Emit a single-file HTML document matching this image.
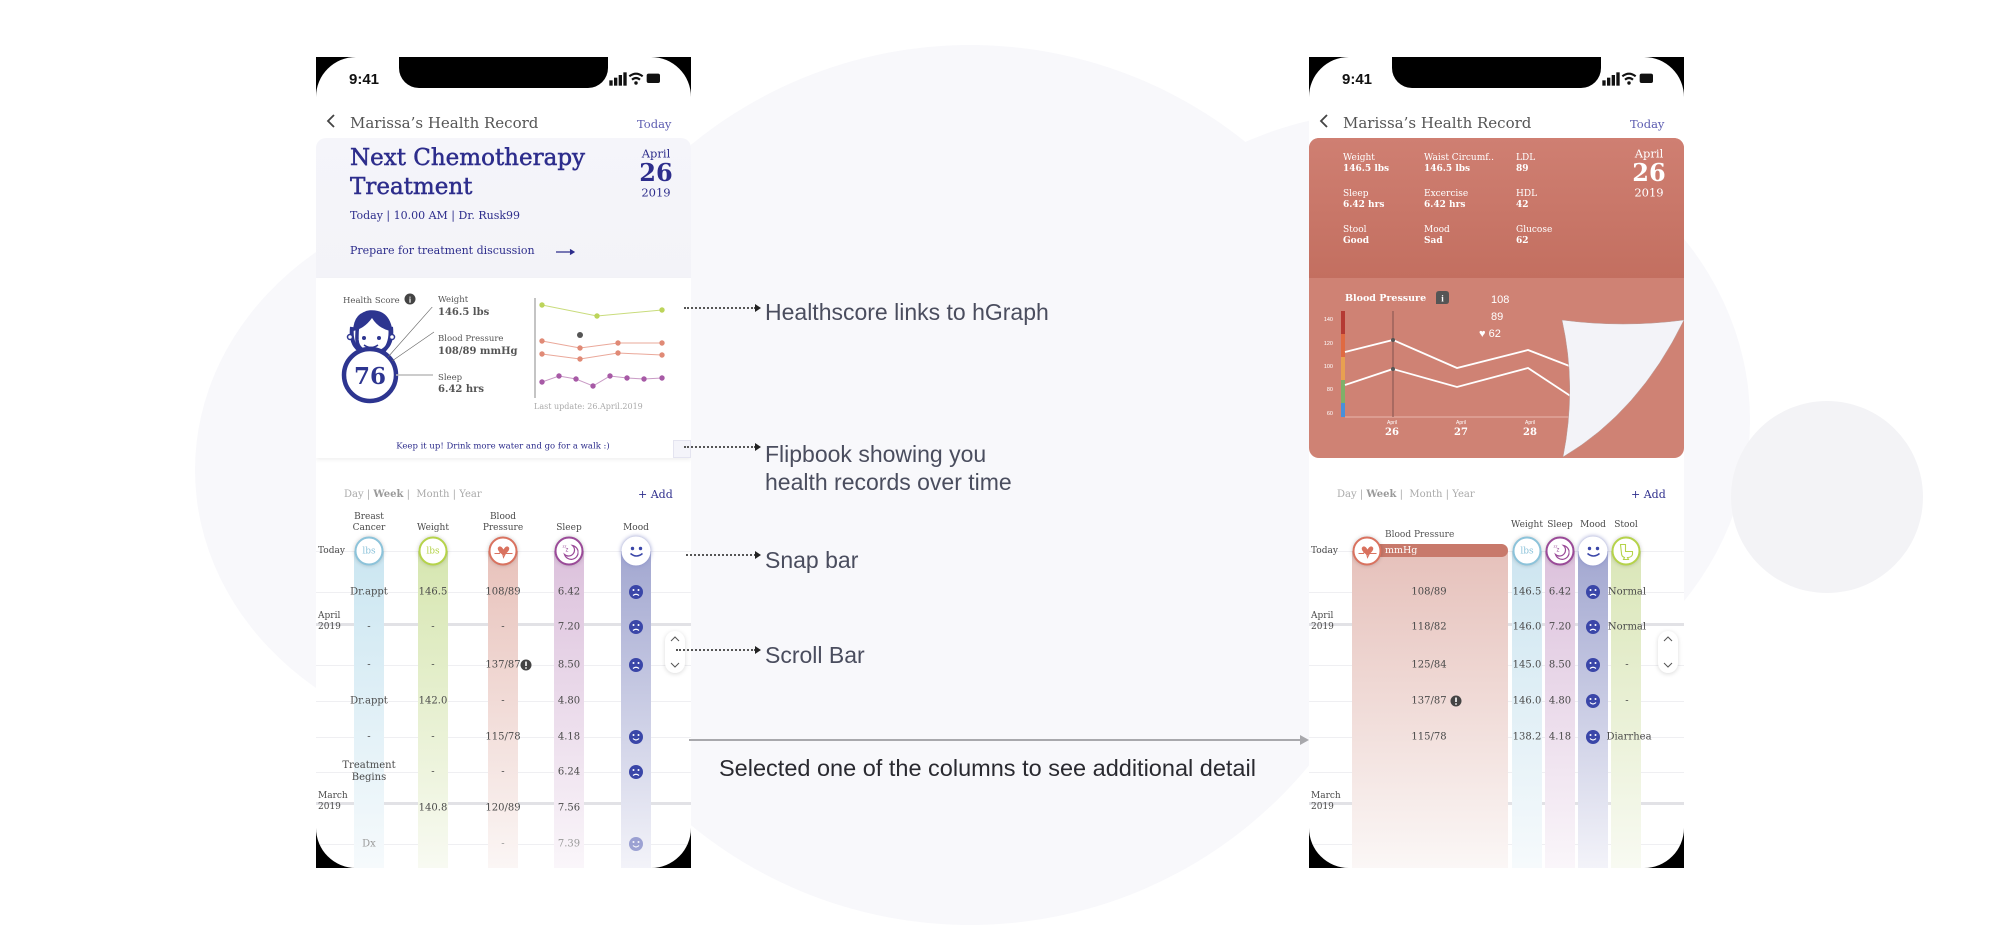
<!DOCTYPE html>
<html><head><meta charset="utf-8"><style>
*{margin:0;padding:0;box-sizing:border-box}
body{width:2000px;height:934px;background:#fff;position:relative;overflow:hidden;font-family:"DejaVu Serif","Liberation Serif",serif}
.blob{position:absolute;background:#f8f8fb;border-radius:50%}
.ph{position:absolute;top:57px;width:375px;height:811px;background:#000;overflow:hidden}
.scr{position:absolute;inset:0;background:#fff;border-radius:40px;overflow:hidden}
.a{position:absolute;white-space:nowrap;line-height:1}
.c{position:absolute;white-space:nowrap;line-height:1.1;transform:translate(-50%,-50%);text-align:center}
.ann{position:absolute;font-family:"Liberation Sans",sans-serif;color:#4a4d5e;font-size:23px;white-space:nowrap;line-height:1}
.dot{position:absolute;border-top:2px dotted #555;height:0}
.dot:after{content:"";position:absolute;right:-5px;top:-5px;border-left:6px solid #222;border-top:4px solid transparent;border-bottom:4px solid transparent}
.strip{position:absolute;width:30px;bottom:0}
.grid{position:absolute;left:0;right:0;height:1px;background:#efeff2}
.gridb{position:absolute;left:0;right:0;height:3px;background:#e2e2e6}
.ic{position:absolute;width:29px;height:29px;border-radius:50%;background:#fff;transform:translate(-50%,-50%);box-shadow:0 0 4px rgba(0,0,0,.2);font-size:9px;display:flex;align-items:center;justify-content:center}
.t{font-size:10px;color:#4a4a4a}
</style></head><body>
<div class="blob" style="left:530px;top:45px;width:880px;height:880px"></div>
<div class="blob" style="left:195px;top:190px;width:650px;height:560px"></div>
<div class="blob" style="left:1050px;top:110px;width:700px;height:620px"></div>
<div class="blob" style="left:1731px;top:401px;width:192px;height:192px;background:#f3f3f6"></div>

<!-- LEFT PHONE -->
<div class="ph" style="left:316px"><div class="scr">
 <div style="position:absolute;left:83px;top:0;width:209px;height:31px;background:#000;border-radius:0 0 20px 20px"></div>
 <div class="a" style="left:33px;top:14px;font:600 15px 'Liberation Sans',sans-serif;color:#111">9:41</div>
 <svg style="position:absolute;left:292px;top:14px" width="56" height="16" viewBox="0 0 40 12"><rect x="0" y="7" width="2.5" height="4" fill="#111"/><rect x="3.5" y="5" width="2.5" height="6" fill="#111"/><rect x="7" y="3" width="2.5" height="8" fill="#111"/><rect x="10.5" y="1" width="2.5" height="10" fill="#111"/><path d="M15 4 Q20 0 25 4 M17 6.5 Q20 4 23 6.5" stroke="#111" stroke-width="1.6" fill="none"/><circle cx="20" cy="9" r="1.3" fill="#111"/><rect x="28" y="2" width="10" height="7" rx="1.5" fill="#111"/></svg>
 <svg style="position:absolute;left:9px;top:56px" width="12" height="16"><path d="M9 2 L3 8 L9 14" stroke="#444" stroke-width="1.8" fill="none"/></svg>
 <div class="a" style="left:34px;top:59px;font-size:15px;color:#555">Marissa’s Health Record</div>
 <div class="a" style="left:321px;top:62px;font-size:11.5px;color:#5b5bb0">Today</div>
 <div style="position:absolute;left:0;top:81px;width:375px;height:140px;background:linear-gradient(#f5f5fa,#f3f3f8);border-radius:10px 10px 0 0"></div>
 <div class="a" style="left:34px;top:90px;font-size:23px;color:#2d2d8c;-webkit-text-stroke:.5px #2d2d8c">Next Chemotherapy</div>
 <div class="a" style="left:34px;top:119px;font-size:23px;color:#2d2d8c;-webkit-text-stroke:.5px #2d2d8c">Treatment</div>
 <div class="a" style="left:34px;top:153px;font-size:11px;color:#2d2d8c">Today | 10.00 AM | Dr. Rusk99</div>
 <div class="a" style="left:34px;top:188px;font-size:11px;color:#2d2d8c">Prepare for treatment discussion</div>
 <svg style="position:absolute;left:240px;top:191px" width="20" height="8"><path d="M0 4 H17 M14 1.5 L18 4 L14 6.5" stroke="#2d2d8c" stroke-width="1.2" fill="#2d2d8c"/></svg>
 <div class="c" style="left:340px;top:97px;font-size:11.5px;color:#2d2d8c">April</div>
 <div class="c" style="left:340px;top:116px;font-size:24px;font-weight:bold;color:#2d2d8c">26</div>
 <div class="c" style="left:340px;top:136px;font-size:11.5px;color:#2d2d8c">2019</div>
 <div style="position:absolute;left:0;top:221px;width:375px;height:180px;background:#fff;box-shadow:0 2px 4px rgba(0,0,0,.06)"></div>
 <div class="a" style="left:27px;top:240px;font-size:8.5px;color:#555">Health Score</div>
 <svg style="position:absolute;left:88px;top:236px" width="12" height="12"><circle cx="6" cy="6" r="5.5" fill="#444"/><text x="6" y="9.5" font-size="8" fill="#fff" text-anchor="middle" font-family="Liberation Serif" font-weight="bold">i</text></svg>
 <svg style="position:absolute;left:20px;top:250px" width="110" height="100">
  <path d="M36 45 Q22 45 21 33 Q20 6 34 5 Q50 4 54 20 Q56 38 44 48" fill="#fff" stroke="#2d3590" stroke-width="3.5"/>
  <path d="M17 24 Q18 4 35 4 Q52 4 54 24 Q42 21 36 11 Q28 22 17 24Z" fill="#2d3590"/>
  <path d="M16 20 Q14 38 25 44 M55 20 Q57 38 46 44" stroke="#2d3590" stroke-width="4" fill="none"/>
  <circle cx="14" cy="30" r="2.5" fill="#fff" stroke="#2d3590" stroke-width="1.5"/><circle cx="56" cy="30" r="2.5" fill="#fff" stroke="#2d3590" stroke-width="1.5"/>
  <circle cx="28" cy="31" r="2" fill="#2d3590"/><circle cx="43" cy="31" r="2" fill="#2d3590"/>
  <path d="M28 38 Q35 43 42 38" stroke="#2d3590" stroke-width="1.6" fill="none"/>
  <circle cx="34" cy="68" r="26" fill="#fff" stroke="#2d3590" stroke-width="4.5"/>
  <text x="34" y="77" font-size="23" font-weight="bold" fill="#2d3590" text-anchor="middle" font-family="DejaVu Serif">76</text>
  <path d="M52 50 L98 -2 M56 54 L98 25" stroke="#666" stroke-width=".6" fill="none"/>
  <path d="M60 68 L97 68" stroke="#bbb" stroke-width="1.5"/>
 </svg>
 <div class="a" style="left:122px;top:239px;font-size:8.5px;color:#555">Weight</div>
 <div class="a" style="left:122px;top:251px;font-size:10px;font-weight:bold;color:#555">146.5 lbs</div>
 <div class="a" style="left:122px;top:278px;font-size:8.5px;color:#555">Blood Pressure</div>
 <div class="a" style="left:122px;top:290px;font-size:10px;font-weight:bold;color:#555">108/89 mmHg</div>
 <div class="a" style="left:122px;top:317px;font-size:8.5px;color:#555">Sleep</div>
 <div class="a" style="left:122px;top:328px;font-size:10px;font-weight:bold;color:#555">6.42 hrs</div>
 <svg style="position:absolute;left:0;top:0" width="375" height="400">
  <line x1="219" y1="241" x2="219" y2="341" stroke="#888" stroke-width="1"/>
  <polyline points="226,248 281,259 346,253" stroke="#c9dc7c" fill="none"/>
  <g fill="#bcd45a"><circle cx="226" cy="248" r="2.7"/><circle cx="281" cy="259" r="2.7"/><circle cx="346" cy="253" r="2.7"/></g>
  <polyline points="226,284 264,291 302,286 346,286" stroke="#eaa89a" fill="none"/>
  <polyline points="226,297 264,302 302,296 346,298" stroke="#eaa89a" fill="none"/>
  <g fill="#e08a76"><circle cx="226" cy="284" r="2.7"/><circle cx="264" cy="291" r="2.7"/><circle cx="302" cy="286" r="2.7"/><circle cx="346" cy="286" r="2.7"/><circle cx="226" cy="297" r="2.7"/><circle cx="264" cy="302" r="2.7"/><circle cx="302" cy="296" r="2.7"/><circle cx="346" cy="298" r="2.7"/></g>
  <circle cx="264" cy="278" r="3" fill="#555"/>
  <polyline points="226,325 243,319 260,322 277,329 294,319 311,321 328,322 346,321" stroke="#c99ac5" fill="none"/>
  <g fill="#a75aa6"><circle cx="226" cy="325" r="2.7"/><circle cx="243" cy="319" r="2.7"/><circle cx="260" cy="322" r="2.7"/><circle cx="277" cy="329" r="2.7"/><circle cx="294" cy="319" r="2.7"/><circle cx="311" cy="321" r="2.7"/><circle cx="328" cy="322" r="2.7"/><circle cx="346" cy="321" r="2.7"/></g>
 </svg>
 <div class="a" style="left:218px;top:346px;font-size:8px;color:#aaa">Last update: 26.April.2019</div>
 <div class="c" style="left:187px;top:390px;font-size:8.5px;color:#2d2d8c">Keep it up! Drink more water and go for a walk :)</div>
 <div style="position:absolute;left:357px;top:383px;width:18px;height:18px;background:#f4f4fa;border:1px solid #e4e4f0"></div>

 <div class="a" style="left:28px;top:433px;font-size:10px;color:#aaa">Day | <b style="color:#999">Week</b> |&nbsp; Month | Year</div>
 <div class="a" style="left:322px;top:432px;font-size:11px;color:#2d2d8c">+ Add</div>
 <div class="grid" style="top:494px"></div>
 <div class="grid" style="top:535px"></div>
 <div class="gridb" style="top:566px"></div>
 <div class="grid" style="top:608px"></div>
 <div class="grid" style="top:644px"></div>
 <div class="grid" style="top:680px"></div>
 <div class="grid" style="top:715px"></div>
 <div class="gridb" style="top:745px"></div>
 <div class="grid" style="top:787px"></div>
 <div class="strip" style="left:38px;top:494px;background:linear-gradient(#cbe6f1,#f6fafc)"></div>
 <div class="strip" style="left:102px;top:494px;background:linear-gradient(#d6e6b0,#f8faf2)"></div>
 <div class="strip" style="left:172px;top:494px;background:linear-gradient(#e8c2bb,#fbf6f5)"></div>
 <div class="strip" style="left:238px;top:494px;background:linear-gradient(#dcc1dc,#faf6fa)"></div>
 <div class="strip" style="left:305px;top:494px;background:linear-gradient(#a2a7d0,#f3f3f9)"></div>
 <div class="c t" style="left:53px;top:466px;font-size:9px;line-height:1.2">Breast<br>Cancer</div>
 <div class="c t" style="left:117px;top:472px;font-size:9px">Weight</div>
 <div class="c t" style="left:187px;top:466px;font-size:9px;line-height:1.2">Blood<br>Pressure</div>
 <div class="c t" style="left:253px;top:472px;font-size:9px">Sleep</div>
 <div class="c t" style="left:320px;top:472px;font-size:9px">Mood</div>
 <div class="a t" style="left:2px;top:490px;font-size:9px">Today</div>
 <div class="a t" style="left:2px;top:554px;font-size:9px;line-height:1.2">April<br>2019</div>
 <div class="a t" style="left:2px;top:734px;font-size:9px;line-height:1.2">March<br>2019</div>
 <div class="ic" style="left:53px;top:494px;border:2.5px solid #8cc3da;color:#8cc3da">lbs</div>
 <div class="ic" style="left:117px;top:494px;border:2.5px solid #b5d34a;color:#b5d34a">lbs</div>
 <div class="ic" style="left:187px;top:494px;border:2.5px solid #d9725f"><svg width="18" height="16"><path d="M9 6 Q6 1 3.5 4 Q2 7 9 12 Q16 7 14.5 4 Q12 1 9 6Z" fill="#d9725f"/><path d="M0 10 H5 L7 6 L9 14 L11 10 H18" stroke="#d9725f" stroke-width="1" fill="none"/></svg></div>
 <div class="ic" style="left:253px;top:494px;border:2.5px solid #9a4a98"><svg width="18" height="18"><path d="M12 3 A7 7 0 1 1 4 12 A5.5 5.5 0 0 0 12 3Z" fill="none" stroke="#9a4a98" stroke-width="1.2"/><text x="5" y="9" font-size="6" fill="#9a4a98" font-family="Liberation Sans">z</text><text x="2" y="5" font-size="4" fill="#9a4a98" font-family="Liberation Sans">zz</text></svg></div>
 <div class="ic" style="left:320px;top:494px;border:2.5px solid #fff;box-shadow:0 0 5px #8a90c8"><svg width="20" height="16"><circle cx="6" cy="5" r="1.7" fill="#3a46a8"/><circle cx="14" cy="5" r="1.7" fill="#3a46a8"/><path d="M4 10 Q10 15 16 10" stroke="#3a46a8" stroke-width="1.5" fill="none"/></svg></div>
 <div class="c t" style="left:53px;top:535px">Dr.appt</div><div class="c t" style="left:117px;top:535px">146.5</div><div class="c t" style="left:187px;top:535px">108/89</div><div class="c t" style="left:253px;top:535px">6.42</div>
 <div class="c t" style="left:53px;top:570px">-</div><div class="c t" style="left:117px;top:570px">-</div><div class="c t" style="left:187px;top:570px">-</div><div class="c t" style="left:253px;top:570px">7.20</div>
 <div class="c t" style="left:53px;top:608px">-</div><div class="c t" style="left:117px;top:608px">-</div><div class="c t" style="left:187px;top:608px">137/87</div><div class="c t" style="left:253px;top:608px">8.50</div>
 <svg style="position:absolute;left:204px;top:602px" width="12" height="12"><circle cx="6" cy="6" r="5.5" fill="#444"/><rect x="5.2" y="2.5" width="1.6" height="4.5" fill="#fff"/><circle cx="6" cy="9" r=".9" fill="#fff"/></svg>
 <div class="c t" style="left:53px;top:644px">Dr.appt</div><div class="c t" style="left:117px;top:644px">142.0</div><div class="c t" style="left:187px;top:644px">-</div><div class="c t" style="left:253px;top:644px">4.80</div>
 <div class="c t" style="left:53px;top:680px">-</div><div class="c t" style="left:117px;top:680px">-</div><div class="c t" style="left:187px;top:680px">115/78</div><div class="c t" style="left:253px;top:680px">4.18</div>
 <div class="c t" style="left:53px;top:715px;line-height:1.2">Treatment<br>Begins</div><div class="c t" style="left:117px;top:715px">-</div><div class="c t" style="left:187px;top:715px">-</div><div class="c t" style="left:253px;top:715px">6.24</div>
 <div class="c t" style="left:117px;top:751px">140.8</div><div class="c t" style="left:187px;top:751px">120/89</div><div class="c t" style="left:253px;top:751px">7.56</div>
 <div class="c t" style="left:53px;top:787px;color:#999">Dx</div><div class="c t" style="left:187px;top:787px;color:#999">-</div><div class="c t" style="left:253px;top:787px;color:#999">7.39</div>
 <svg style="position:absolute;left:312px;top:527px" width="16" height="16"><circle cx="8" cy="8" r="7" fill="#3a46a8"/><circle cx="5.5" cy="6" r="1" fill="#fff"/><circle cx="10.5" cy="6" r="1" fill="#fff"/><path d="M5 11.5 Q8 9 11 11.5" stroke="#fff" stroke-width="1.2" fill="none"/></svg>
 <svg style="position:absolute;left:312px;top:562px" width="16" height="16"><circle cx="8" cy="8" r="7" fill="#3a46a8"/><circle cx="5.5" cy="6" r="1" fill="#fff"/><circle cx="10.5" cy="6" r="1" fill="#fff"/><path d="M5 11.5 Q8 9 11 11.5" stroke="#fff" stroke-width="1.2" fill="none"/></svg>
 <svg style="position:absolute;left:312px;top:600px" width="16" height="16"><circle cx="8" cy="8" r="7" fill="#3a46a8"/><circle cx="5.5" cy="6" r="1" fill="#fff"/><circle cx="10.5" cy="6" r="1" fill="#fff"/><path d="M5 11.5 Q8 9 11 11.5" stroke="#fff" stroke-width="1.2" fill="none"/></svg>
 <svg style="position:absolute;left:312px;top:672px" width="16" height="16"><circle cx="8" cy="8" r="7" fill="#3a46a8"/><circle cx="5.5" cy="6" r="1" fill="#fff"/><circle cx="10.5" cy="6" r="1" fill="#fff"/><path d="M5 9.5 Q8 12.5 11 9.5" stroke="#fff" stroke-width="1.2" fill="none"/></svg>
 <svg style="position:absolute;left:312px;top:707px" width="16" height="16"><circle cx="8" cy="8" r="7" fill="#3a46a8"/><circle cx="5.5" cy="6" r="1" fill="#fff"/><circle cx="10.5" cy="6" r="1" fill="#fff"/><path d="M5 11.5 Q8 9 11 11.5" stroke="#fff" stroke-width="1.2" fill="none"/></svg>
 <svg style="position:absolute;left:312px;top:779px;opacity:.45" width="16" height="16"><circle cx="8" cy="8" r="7" fill="#3a46a8"/><circle cx="5.5" cy="6" r="1" fill="#fff"/><circle cx="10.5" cy="6" r="1" fill="#fff"/><path d="M5 9.5 Q8 12.5 11 9.5" stroke="#fff" stroke-width="1.2" fill="none"/></svg>
 <div style="position:absolute;left:349px;top:574px;width:20px;height:42px;background:#fff;border-radius:10px;box-shadow:0 1px 5px rgba(0,0,0,.15)"><svg width="20" height="42"><path d="M6 10 L10 6 L14 10 M6 32 L10 36 L14 32" stroke="#555" stroke-width="1" fill="none"/></svg></div>
</div></div>

<!-- RIGHT PHONE -->
<div class="ph" style="left:1309px"><div class="scr">
 <div style="position:absolute;left:83px;top:0;width:209px;height:31px;background:#000;border-radius:0 0 20px 20px"></div>
 <div class="a" style="left:33px;top:14px;font:600 15px 'Liberation Sans',sans-serif;color:#111">9:41</div>
 <svg style="position:absolute;left:292px;top:14px" width="56" height="16" viewBox="0 0 40 12"><rect x="0" y="7" width="2.5" height="4" fill="#111"/><rect x="3.5" y="5" width="2.5" height="6" fill="#111"/><rect x="7" y="3" width="2.5" height="8" fill="#111"/><rect x="10.5" y="1" width="2.5" height="10" fill="#111"/><path d="M15 4 Q20 0 25 4 M17 6.5 Q20 4 23 6.5" stroke="#111" stroke-width="1.6" fill="none"/><circle cx="20" cy="9" r="1.3" fill="#111"/><rect x="28" y="2" width="10" height="7" rx="1.5" fill="#111"/></svg>
 <svg style="position:absolute;left:9px;top:56px" width="12" height="16"><path d="M9 2 L3 8 L9 14" stroke="#444" stroke-width="1.8" fill="none"/></svg>
 <div class="a" style="left:34px;top:59px;font-size:15px;color:#555">Marissa’s Health Record</div>
 <div class="a" style="left:321px;top:62px;font-size:11.5px;color:#5b5bb0">Today</div>
 <div style="position:absolute;left:0;top:81px;width:375px;height:320px;border-radius:10px;overflow:hidden;background:#cf8274">
  <div style="position:absolute;left:0;top:0;width:375px;height:140px;background:linear-gradient(#cf7f72,#c36f60)"></div>
 </div>
 <div style="font-size:9px;color:#fff">
  <div class="a" style="left:34px;top:97px">Weight</div><div class="a" style="left:34px;top:108px;font-weight:bold">146.5 lbs</div>
  <div class="a" style="left:115px;top:97px">Waist Circumf..</div><div class="a" style="left:115px;top:108px;font-weight:bold">146.5 lbs</div>
  <div class="a" style="left:207px;top:97px">LDL</div><div class="a" style="left:207px;top:108px;font-weight:bold">89</div>
  <div class="a" style="left:34px;top:133px">Sleep</div><div class="a" style="left:34px;top:144px;font-weight:bold">6.42 hrs</div>
  <div class="a" style="left:115px;top:133px">Excercise</div><div class="a" style="left:115px;top:144px;font-weight:bold">6.42 hrs</div>
  <div class="a" style="left:207px;top:133px">HDL</div><div class="a" style="left:207px;top:144px;font-weight:bold">42</div>
  <div class="a" style="left:34px;top:169px">Stool</div><div class="a" style="left:34px;top:180px;font-weight:bold">Good</div>
  <div class="a" style="left:115px;top:169px">Mood</div><div class="a" style="left:115px;top:180px;font-weight:bold">Sad</div>
  <div class="a" style="left:207px;top:169px">Glucose</div><div class="a" style="left:207px;top:180px;font-weight:bold">62</div>
 </div>
 <div class="c" style="left:340px;top:97px;font-size:11.5px;color:#fff">April</div>
 <div class="c" style="left:340px;top:116px;font-size:24px;font-weight:bold;color:#fff">26</div>
 <div class="c" style="left:340px;top:136px;font-size:11.5px;color:#fff">2019</div>
 <div class="a" style="left:36px;top:237px;font-size:9.5px;font-weight:bold;color:#fff">Blood Pressure</div>
 <svg style="position:absolute;left:127px;top:234px" width="13" height="13"><path d="M3 0 H10 Q13 0 13 3 V10 Q13 13 10 13 H0 V3 Q0 0 3 0Z" fill="#555"/><text x="6.5" y="10.5" font-size="9" fill="#fff" text-anchor="middle" font-family="Liberation Serif" font-weight="bold">i</text></svg>
 <div class="a" style="left:182px;top:237px;font:11px 'Liberation Sans',sans-serif;color:#fff">108</div>
 <div class="a" style="left:182px;top:254px;font:11px 'Liberation Sans',sans-serif;color:#fff">89</div>
 <div class="a" style="left:170px;top:271px;font:11px 'Liberation Sans',sans-serif;color:#fff">♥ 62</div>
 <svg style="position:absolute;left:0;top:0" width="375" height="410" font-family="Liberation Sans">
  <g font-size="5.5" fill="#fff" text-anchor="end"><text x="24" y="264">140</text><text x="24" y="288">120</text><text x="24" y="311">100</text><text x="24" y="334">80</text><text x="24" y="358">60</text></g>
  <rect x="32" y="254" width="4" height="23" fill="#b53a33"/><rect x="32" y="277" width="4" height="23" fill="#e06a42"/><rect x="32" y="300" width="4" height="23" fill="#e8a050"/><rect x="32" y="323" width="4" height="23" fill="#7fb069"/><rect x="32" y="346" width="4" height="14" fill="#4a90d9"/>
  <line x1="36" y1="360" x2="300" y2="360" stroke="#e8b5ad" stroke-width="1"/>
  <line x1="84" y1="254" x2="84" y2="360" stroke="#8e5a55" stroke-width="1.2"/>
  <polyline points="36,295 84,283 148,311 219,293 263,310 300,320" stroke="#fff" stroke-width="1.8" fill="none"/>
  <polyline points="36,328 84,312 148,330 219,311 263,340 300,345" stroke="#fff" stroke-width="1.8" fill="none"/>
  <circle cx="84" cy="283" r="2" fill="#555"/><circle cx="84" cy="312" r="2" fill="#555"/>
  <g fill="#fff" text-anchor="middle"><text x="83" y="367" font-size="5">April</text><text x="152" y="367" font-size="5">April</text><text x="221" y="367" font-size="5">April</text>
  <text x="83" y="378" font-size="10" font-weight="bold" font-family="DejaVu Serif">26</text><text x="152" y="378" font-size="10" font-weight="bold" font-family="DejaVu Serif">27</text><text x="221" y="378" font-size="10" font-weight="bold" font-family="DejaVu Serif">28</text></g>
  <path d="M253,263 Q314,271 375,263 Q330,355 254,400 Q268,330 253,263Z" fill="#f3f3f8" stroke="#b89a95" stroke-width=".5"/>
 </svg>

 <div class="a" style="left:28px;top:433px;font-size:10px;color:#aaa">Day | <b style="color:#999">Week</b> |&nbsp; Month | Year</div>
 <div class="a" style="left:322px;top:432px;font-size:11px;color:#2d2d8c">+ Add</div>
 <div class="grid" style="top:494px"></div>
 <div class="grid" style="top:535px"></div>
 <div class="gridb" style="top:566px"></div>
 <div class="grid" style="top:608px"></div>
 <div class="grid" style="top:644px"></div>
 <div class="grid" style="top:680px"></div>
 <div class="grid" style="top:715px"></div>
 <div class="gridb" style="top:745px"></div>
 <div class="grid" style="top:787px"></div>
 <div class="strip" style="left:43px;width:156px;top:494px;background:linear-gradient(#e6c1bb,#fbf7f6)"></div>
 <div class="strip" style="left:203px;top:494px;background:linear-gradient(#cde5f0,#f6fafc)"></div>
 <div class="strip" style="left:236px;top:494px;background:linear-gradient(#dcc1dc,#faf6fa)"></div>
 <div class="strip" style="left:269px;top:494px;background:linear-gradient(#a2a7d0,#f3f3f9)"></div>
 <div class="strip" style="left:302px;top:494px;background:linear-gradient(#dae6b8,#f8faf2)"></div>
 <div style="position:absolute;left:66px;top:487px;width:133px;height:13px;background:#c8796b;border-radius:0 7px 7px 0"></div>
 <div class="a" style="left:76px;top:489px;font-size:9.5px;color:#fff">mmHg</div>
 <div class="a" style="left:76px;top:474px;font-size:9px;color:#555">Blood Pressure</div>
 <div class="c t" style="left:218px;top:469px;font-size:9px">Weight</div>
 <div class="c t" style="left:251px;top:469px;font-size:9px">Sleep</div>
 <div class="c t" style="left:284px;top:469px;font-size:9px">Mood</div>
 <div class="c t" style="left:317px;top:469px;font-size:9px">Stool</div>
 <div class="a t" style="left:2px;top:490px;font-size:9px">Today</div>
 <div class="a t" style="left:2px;top:554px;font-size:9px;line-height:1.2">April<br>2019</div>
 <div class="a t" style="left:2px;top:734px;font-size:9px;line-height:1.2">March<br>2019</div>
 <div class="ic" style="left:58px;top:494px;border:2.5px solid #d9725f"><svg width="18" height="16"><path d="M9 6 Q6 1 3.5 4 Q2 7 9 12 Q16 7 14.5 4 Q12 1 9 6Z" fill="#d9725f"/><path d="M0 10 H5 L7 6 L9 14 L11 10 H18" stroke="#d9725f" stroke-width="1" fill="none"/></svg></div>
 <div class="ic" style="left:218px;top:494px;border:2.5px solid #8cc3da;color:#8cc3da">lbs</div>
 <div class="ic" style="left:251px;top:494px;border:2.5px solid #9a4a98"><svg width="18" height="18"><path d="M12 3 A7 7 0 1 1 4 12 A5.5 5.5 0 0 0 12 3Z" fill="none" stroke="#9a4a98" stroke-width="1.2"/><text x="5" y="9" font-size="6" fill="#9a4a98" font-family="Liberation Sans">z</text><text x="2" y="5" font-size="4" fill="#9a4a98" font-family="Liberation Sans">zz</text></svg></div>
 <div class="ic" style="left:284px;top:494px;border:2.5px solid #fff;box-shadow:0 0 5px #8a90c8"><svg width="20" height="16"><circle cx="6" cy="5" r="1.7" fill="#3a46a8"/><circle cx="14" cy="5" r="1.7" fill="#3a46a8"/><path d="M4 10 Q10 15 16 10" stroke="#3a46a8" stroke-width="1.5" fill="none"/></svg></div>
 <div class="ic" style="left:317px;top:494px;border:2.5px solid #b5d34a"><svg width="18" height="18"><path d="M3 2 H8 V9 H15 V12 Q14 15 10 15 L11 17 H6 L7 15 Q4 14 4 11 Z" fill="none" stroke="#b5d34a" stroke-width="1.1"/></svg></div>
 <div class="c t" style="left:120px;top:535px">108/89</div><div class="c t" style="left:218px;top:535px">146.5</div><div class="c t" style="left:251px;top:535px">6.42</div><div class="c t" style="left:318px;top:535px">Normal</div>
 <div class="c t" style="left:120px;top:570px">118/82</div><div class="c t" style="left:218px;top:570px">146.0</div><div class="c t" style="left:251px;top:570px">7.20</div><div class="c t" style="left:318px;top:570px">Normal</div>
 <div class="c t" style="left:120px;top:608px">125/84</div><div class="c t" style="left:218px;top:608px">145.0</div><div class="c t" style="left:251px;top:608px">8.50</div><div class="c t" style="left:318px;top:608px">-</div>
 <div class="c t" style="left:120px;top:644px">137/87</div><div class="c t" style="left:218px;top:644px">146.0</div><div class="c t" style="left:251px;top:644px">4.80</div><div class="c t" style="left:318px;top:644px">-</div>
 <svg style="position:absolute;left:141px;top:638px" width="12" height="12"><circle cx="6" cy="6" r="5.5" fill="#444"/><rect x="5.2" y="2.5" width="1.6" height="4.5" fill="#fff"/><circle cx="6" cy="9" r=".9" fill="#fff"/></svg>
 <div class="c t" style="left:120px;top:680px">115/78</div><div class="c t" style="left:218px;top:680px">138.2</div><div class="c t" style="left:251px;top:680px">4.18</div><div class="c t" style="left:320px;top:680px">Diarrhea</div>
 <svg style="position:absolute;left:276px;top:527px" width="16" height="16"><circle cx="8" cy="8" r="7" fill="#3a46a8"/><circle cx="5.5" cy="6" r="1" fill="#fff"/><circle cx="10.5" cy="6" r="1" fill="#fff"/><path d="M5 11.5 Q8 9 11 11.5" stroke="#fff" stroke-width="1.2" fill="none"/></svg>
 <svg style="position:absolute;left:276px;top:562px" width="16" height="16"><circle cx="8" cy="8" r="7" fill="#3a46a8"/><circle cx="5.5" cy="6" r="1" fill="#fff"/><circle cx="10.5" cy="6" r="1" fill="#fff"/><path d="M5 11.5 Q8 9 11 11.5" stroke="#fff" stroke-width="1.2" fill="none"/></svg>
 <svg style="position:absolute;left:276px;top:600px" width="16" height="16"><circle cx="8" cy="8" r="7" fill="#3a46a8"/><circle cx="5.5" cy="6" r="1" fill="#fff"/><circle cx="10.5" cy="6" r="1" fill="#fff"/><path d="M5 11.5 Q8 9 11 11.5" stroke="#fff" stroke-width="1.2" fill="none"/></svg>
 <svg style="position:absolute;left:276px;top:636px" width="16" height="16"><circle cx="8" cy="8" r="7" fill="#3a46a8"/><circle cx="5.5" cy="6" r="1" fill="#fff"/><circle cx="10.5" cy="6" r="1" fill="#fff"/><path d="M5 9.5 Q8 12.5 11 9.5" stroke="#fff" stroke-width="1.2" fill="none"/></svg>
 <svg style="position:absolute;left:276px;top:672px" width="16" height="16"><circle cx="8" cy="8" r="7" fill="#3a46a8"/><circle cx="5.5" cy="6" r="1" fill="#fff"/><circle cx="10.5" cy="6" r="1" fill="#fff"/><path d="M5 9.5 Q8 12.5 11 9.5" stroke="#fff" stroke-width="1.2" fill="none"/></svg>
 <div style="position:absolute;left:349px;top:574px;width:20px;height:42px;background:#fff;border-radius:10px;box-shadow:0 1px 5px rgba(0,0,0,.15)"><svg width="20" height="42"><path d="M6 10 L10 6 L14 10 M6 32 L10 36 L14 32" stroke="#555" stroke-width="1" fill="none"/></svg></div>
</div></div>

<!-- annotations -->
<div class="dot" style="left:684px;top:307px;width:72px"></div>
<div class="ann" style="left:765px;top:301px">Healthscore links to hGraph</div>
<div class="dot" style="left:684px;top:446px;width:72px"></div>
<div class="ann" style="left:765px;top:440px;line-height:28px">Flipbook showing you<br>health records over time</div>
<div class="dot" style="left:686px;top:554px;width:70px"></div>
<div class="ann" style="left:765px;top:549px">Snap bar</div>
<div class="dot" style="left:676px;top:649px;width:80px"></div>
<div class="ann" style="left:765px;top:644px">Scroll Bar</div>
<div style="position:absolute;left:689px;top:739px;width:612px;height:2px;background:#a8a8ac"></div>
<div style="position:absolute;left:1300px;top:735px;border-left:9px solid #a8a8ac;border-top:5px solid transparent;border-bottom:5px solid transparent"></div>
<div class="ann" style="left:719px;top:757px;font-size:23.5px;color:#2a2a30">Selected one of the columns to see additional detail</div>
</body></html>
